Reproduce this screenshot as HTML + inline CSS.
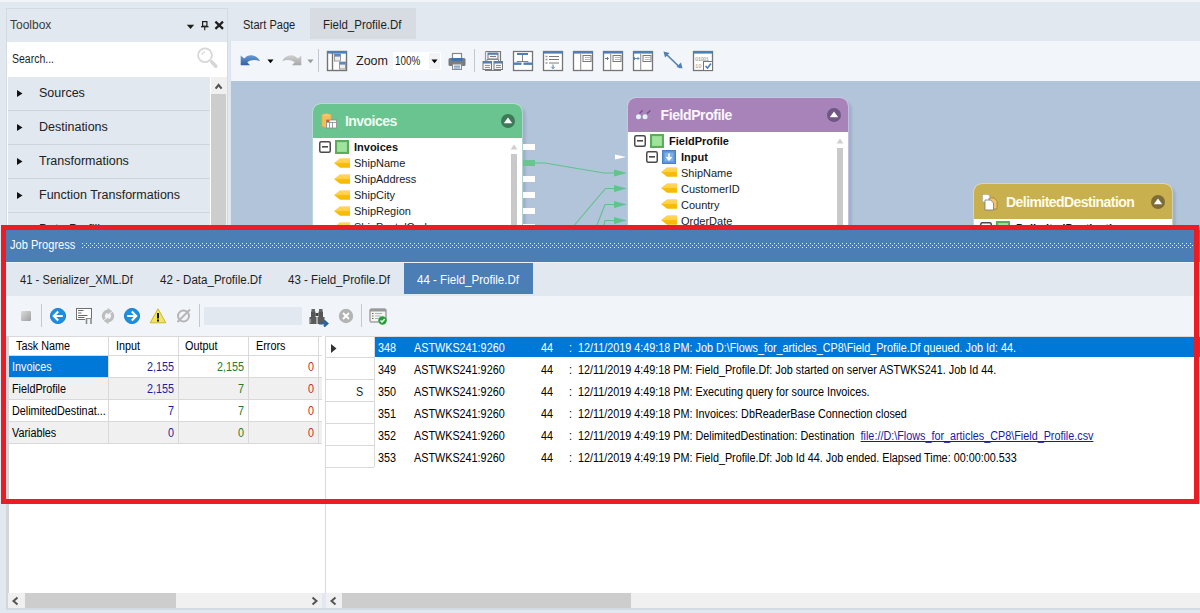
<!DOCTYPE html>
<html><head><meta charset="utf-8">
<style>
*{margin:0;padding:0;box-sizing:border-box}
html,body{width:1200px;height:613px;overflow:hidden;background:#e1e8f0;font-family:"Liberation Sans",sans-serif;color:#1e1e1e;position:relative}
.a{position:absolute;display:block}
.t{position:absolute;white-space:nowrap;line-height:1}
</style></head><body>

<div class="a" style="left:0px;top:0px;width:1200px;height:2px;background:#f1f4f8;"></div>
<div class="a" style="left:6px;top:8px;width:222px;height:605px;background:#e1e8f0;border:1px solid #d3dae2"></div>
<div class="t" style="left:10px;top:18.84px;font-size:12px;color:#3b3b3b;">Toolbox</div>
<svg class="a" style="left:186px;top:20px;" width="40" height="12" viewBox="0 0 40 12"><path d="M0.8 4.8H8.2L4.5 8.9z" fill="#1e1e1e"/><rect x="16.6" y="1.6" width="4.3" height="4.6" fill="none" stroke="#1e1e1e" stroke-width="1.2"/><path d="M15 6.7H22.5" stroke="#1e1e1e" stroke-width="1.3"/><path d="M18.75 7V10.2" stroke="#1e1e1e" stroke-width="1.1"/><path d="M30.2 2.4L36.2 8.1M36.2 2.4L30.2 8.1" stroke="#1e1e1e" stroke-width="2.2" stroke-linecap="square"/></svg>
<div class="a" style="left:7px;top:42px;width:220px;height:35px;background:#ffffff;"></div>
<div class="t" style="left:12px;top:52.84px;font-size:12px;color:#1e1e1e;transform:scaleX(0.875);transform-origin:0 50%;">Search...</div>
<svg class="a" style="left:196px;top:47px;" width="24" height="24" viewBox="0 0 24 24"><circle cx="9" cy="8.3" r="6.9" fill="none" stroke="#d6d6d6" stroke-width="1.8"/><path d="M6 8A3.6 3.6 0 0 1 9 4.9" fill="none" stroke="#d6d6d6" stroke-width="1.1"/><path d="M15.8 15L19.8 19.2" stroke="#d6d6d6" stroke-width="3.6" stroke-linecap="round"/></svg>
<div class="a" style="left:8px;top:110px;width:202px;height:1px;background:#cdd5de;"></div>
<svg class="a" style="left:17px;top:90px;" width="7" height="8" viewBox="0 0 7 8"><path d="M0 0L5.5 3.5L0 7z" fill="#111"/></svg>
<div class="t" style="left:39px;top:87.42px;font-size:12.5px;color:#222;">Sources</div>
<div class="a" style="left:8px;top:144px;width:202px;height:1px;background:#cdd5de;"></div>
<svg class="a" style="left:17px;top:124px;" width="7" height="8" viewBox="0 0 7 8"><path d="M0 0L5.5 3.5L0 7z" fill="#111"/></svg>
<div class="t" style="left:39px;top:121.42px;font-size:12.5px;color:#222;">Destinations</div>
<div class="a" style="left:8px;top:178px;width:202px;height:1px;background:#cdd5de;"></div>
<svg class="a" style="left:17px;top:158px;" width="7" height="8" viewBox="0 0 7 8"><path d="M0 0L5.5 3.5L0 7z" fill="#111"/></svg>
<div class="t" style="left:39px;top:155.42px;font-size:12.5px;color:#222;">Transformations</div>
<div class="a" style="left:8px;top:212px;width:202px;height:1px;background:#cdd5de;"></div>
<svg class="a" style="left:17px;top:192px;" width="7" height="8" viewBox="0 0 7 8"><path d="M0 0L5.5 3.5L0 7z" fill="#111"/></svg>
<div class="t" style="left:39px;top:189.42px;font-size:12.5px;color:#222;">Function Transformations</div>
<div class="a" style="left:8px;top:246px;width:202px;height:1px;background:#cdd5de;"></div>
<svg class="a" style="left:17px;top:226px;" width="7" height="8" viewBox="0 0 7 8"><path d="M0 0L5.5 3.5L0 7z" fill="#111"/></svg>
<div class="t" style="left:39px;top:223.42px;font-size:12.5px;color:#222;">Data Profiling</div>
<div class="a" style="left:7px;top:77px;width:1px;height:150px;background:#ffffff;"></div>
<div class="a" style="left:210px;top:77px;width:17px;height:150px;background:#f0f0f0;"></div>
<div class="a" style="left:210px;top:77px;width:1px;height:150px;background:#ffffff;"></div>
<svg class="a" style="left:213px;top:81.7px;" width="12" height="9" viewBox="0 0 12 9"><path d="M2.6 6.6L5.6 3L8.6 6.6" fill="none" stroke="#555" stroke-width="2.1"/></svg>
<div class="a" style="left:211px;top:94px;width:15px;height:140px;background:#cdcdcd;"></div>
<div class="a" style="left:227px;top:8px;width:1px;height:605px;background:#d3dae2;"></div>
<div class="a" style="left:230px;top:41px;width:1px;height:200px;background:#dbe3ec;"></div>
<div class="t" style="left:243px;top:18.84px;font-size:12px;color:#1e1e1e;transform:scaleX(0.92);transform-origin:0 50%;">Start Page</div>
<div class="a" style="left:310px;top:8px;width:106px;height:31px;background:#d7dce2;"></div>
<div class="t" style="left:323px;top:18.84px;font-size:12px;color:#1e1e1e;transform:scaleX(0.956);transform-origin:0 50%;">Field_Profile.Df</div>
<div class="a" style="left:231px;top:41px;width:969px;height:40px;background:#f2f5f9;"></div>
<div class="a" style="left:231px;top:81px;width:969px;height:170px;background:#b2c4da;"></div>
<svg class="a" style="left:240px;top:53px;" width="21" height="13" viewBox="0 0 21 13"><defs><linearGradient id="ug" x1="0" y1="0" x2="0" y2="1"><stop offset="0" stop-color="#6a9ad4"/><stop offset="1" stop-color="#2f62a8"/></linearGradient></defs><path d="M0.7 2.5V12.2H10L7.3 9.3C10.5 6.6 15.5 6.2 20 8.2C16.5 1.5 8.5 0 4.2 5.6z" fill="url(#ug)"/></svg>
<svg class="a" style="left:267px;top:59px;" width="7" height="5" viewBox="0 0 7 5"><path d="M0.5 0.5H6.5L3.5 4.2z" fill="#000"/></svg>
<svg class="a" style="left:281px;top:53px;" width="21" height="13" viewBox="0 0 21 13"><defs><linearGradient id="rg" x1="0" y1="0" x2="0" y2="1"><stop offset="0" stop-color="#d0d0d0"/><stop offset="1" stop-color="#a8a8a8"/></linearGradient></defs><path d="M20.3 2.5V12.2H11L13.7 9.3C10.5 6.6 5.5 6.2 1 8.2C4.5 1.5 12.5 0 16.8 5.6z" fill="url(#rg)"/></svg>
<svg class="a" style="left:307px;top:59px;" width="7" height="5" viewBox="0 0 7 5"><path d="M0.5 0.5H6.5L3.5 4.2z" fill="#999"/></svg>
<div class="a" style="left:318px;top:49px;width:1px;height:23px;background:#c4c9cf;"></div>
<svg class="a" style="left:326px;top:50px;" width="22" height="22" viewBox="0 0 22 22"><rect x="1.5" y="1.5" width="19" height="19" fill="#fff" stroke="#747474" stroke-width="1.4"/><rect x="1" y="1" width="20" height="2.6" fill="#4f7fb8"/><path d="M6.5 3V21" stroke="#747474" stroke-width="1.4"/><rect x="8.5" y="4" width="6" height="7" fill="#eee" stroke="#888" stroke-width="0.8"/><rect x="8.5" y="4" width="6" height="2.6" fill="#5a8ac4"/><rect x="13.5" y="12" width="6" height="7" fill="#eee" stroke="#888" stroke-width="0.8"/><rect x="13.5" y="12" width="6" height="2.6" fill="#5a8ac4"/></svg>
<div class="t" style="left:356px;top:55.02px;font-size:12.5px;color:#1e1e1e;">Zoom</div>
<div class="a" style="left:393px;top:52px;width:48px;height:18px;background:#ffffff;"></div>
<div class="a" style="left:429px;top:53px;width:11px;height:16px;background:#f1f3f6;"></div>
<div class="t" style="left:395px;top:54.84px;font-size:12px;color:#1e1e1e;transform:scaleX(0.82);transform-origin:0 50%;">100%</div>
<svg class="a" style="left:431px;top:59px;" width="7" height="5" viewBox="0 0 7 5"><path d="M0.5 0.5H6.5L3.5 4.2z" fill="#000"/></svg>
<svg class="a" style="left:448px;top:52px;" width="18" height="18" viewBox="0 0 18 18"><rect x="4.5" y="1.5" width="9" height="6" fill="#fff" stroke="#888" stroke-width="1.2"/><rect x="0.5" y="6" width="17" height="8" rx="1.5" fill="#7b7b7b"/><rect x="3.5" y="6" width="11" height="2.8" fill="#3d72b4"/><rect x="4.5" y="12" width="9" height="5.5" fill="#eef2f6" stroke="#8a8a8a" stroke-width="1"/><path d="M6 14.2H12M6 16H12" stroke="#4f7fb8" stroke-width="0.9"/></svg>
<div class="a" style="left:474px;top:49px;width:1px;height:23px;background:#c4c9cf;"></div>
<svg class="a" style="left:482px;top:50px;" width="22" height="22" viewBox="0 0 22 22"><path d="M3.5 1.5H18.5V11" fill="none" stroke="#7a7a7a" stroke-width="1.2"/><path d="M3.5 1.5V11" fill="none" stroke="#9a9a9a" stroke-width="1.2"/><rect x="6" y="3" width="10" height="6" fill="#f4f4f4" stroke="#7a7a7a" stroke-width="1"/><rect x="6" y="3" width="10" height="1.8" fill="#4f7fb8"/><path d="M8 6.5H14" stroke="#7a7a7a"/><rect x="1" y="11.5" width="8.5" height="8" fill="#f4f4f4" stroke="#7a7a7a" stroke-width="1"/><rect x="1" y="11.5" width="8.5" height="2" fill="#4f7fb8"/><rect x="12" y="11.5" width="8.5" height="8" fill="#f4f4f4" stroke="#7a7a7a" stroke-width="1"/><rect x="12" y="11.5" width="8.5" height="2" fill="#4f7fb8"/><path d="M3 15.5H8M3 17.5H8M14 15.5H19M14 17.5H19" stroke="#7a7a7a" stroke-width="0.8"/><path d="M3 20.5H19" stroke="#7a7a7a" stroke-width="1"/><path d="M5 11.5V9.5H16.5V11.5" fill="none" stroke="#7a7a7a" stroke-width="0.8"/></svg>
<svg class="a" style="left:512px;top:50px;" width="22" height="22" viewBox="0 0 22 22"><rect x="1.5" y="1.5" width="19" height="19" fill="#fff" stroke="#757575" stroke-width="1.3"/><rect x="5" y="3" width="11" height="2" fill="#4f7fb8"/><path d="M10.5 5V11.5M5 12.5V11.5H16V12.5" fill="none" stroke="#757575" stroke-width="0.9"/><rect x="1" y="12.5" width="8.5" height="2.4" fill="#4f7fb8"/><rect x="11.5" y="12.5" width="9.5" height="2.4" fill="#4f7fb8"/></svg>
<svg class="a" style="left:542px;top:50px;" width="22" height="22" viewBox="0 0 22 22"><rect x="1.5" y="1.5" width="19" height="19" fill="#fff" stroke="#757575" stroke-width="1.3"/><rect x="1" y="1" width="20" height="2.6" fill="#4f7fb8"/><path d="M7 6.5H17M7 9.5H17M7 13H17" stroke="#7a7a7a" stroke-width="1"/><path d="M3.5 6.5H5.5M3.5 9.5H5.5M3.5 13H5.5" stroke="#999" stroke-width="1.4"/><path d="M11 14.5V18.5M9.3 16.8L11 18.6L12.7 16.8" fill="none" stroke="#4f7fb8" stroke-width="1"/></svg>
<svg class="a" style="left:572px;top:50px;" width="22" height="22" viewBox="0 0 22 22"><rect x="1.5" y="1.5" width="19" height="19" fill="#fff" stroke="#757575" stroke-width="1.3"/><rect x="1" y="1" width="20" height="2.6" fill="#4f7fb8"/><rect x="8" y="3" width="1.5" height="17" fill="#c8c8c8"/><path d="M8.5 3V20" stroke="#8a8a8a" stroke-width="0.6"/><rect x="11" y="5.5" width="8" height="6" fill="#fff" stroke="#7a7a7a" stroke-width="1"/><path d="M13 7.5H18M13 9.5H18" stroke="#9a9a9a" stroke-width="0.7"/></svg>
<svg class="a" style="left:602px;top:50px;" width="22" height="22" viewBox="0 0 22 22"><rect x="1.5" y="1.5" width="19" height="19" fill="#fff" stroke="#757575" stroke-width="1.3"/><rect x="1" y="1" width="20" height="2.6" fill="#4f7fb8"/><rect x="8" y="3" width="1.5" height="17" fill="#c8c8c8"/><path d="M8.5 3V20" stroke="#8a8a8a" stroke-width="0.6"/><rect x="11" y="5.5" width="8" height="6" fill="#fff" stroke="#7a7a7a" stroke-width="1"/><path d="M13 7.5H18M13 9.5H18" stroke="#9a9a9a" stroke-width="0.7"/><path d="M3 8.5H6M5 7L6.5 8.5L5 10" fill="none" stroke="#4f7fb8" stroke-width="1"/></svg>
<svg class="a" style="left:632px;top:50px;" width="22" height="22" viewBox="0 0 22 22"><rect x="1.5" y="1.5" width="19" height="19" fill="#fff" stroke="#757575" stroke-width="1.3"/><rect x="1" y="1" width="20" height="2.6" fill="#4f7fb8"/><rect x="8" y="3" width="1.5" height="17" fill="#c8c8c8"/><path d="M8.5 3V20" stroke="#8a8a8a" stroke-width="0.6"/><rect x="11" y="5.5" width="8" height="6" fill="#fff" stroke="#7a7a7a" stroke-width="1"/><path d="M13 7.5H18M13 9.5H18" stroke="#9a9a9a" stroke-width="0.7"/><path d="M1.5 8.5H7M3 7L1.5 8.5L3 10M5.5 7L7 8.5L5.5 10" fill="none" stroke="#4f7fb8" stroke-width="0.9"/></svg>
<svg class="a" style="left:662px;top:50px;" width="22" height="22" viewBox="0 0 22 22"><path d="M4 4L18.5 18" stroke="#4f7fb8" stroke-width="1.6"/><path d="M1.5 1.5L7.5 3L3 7.5z" fill="#4f7fb8"/><path d="M20.5 18.5L14.5 17L19 12.5z" fill="#4f7fb8"/></svg>
<svg class="a" style="left:692px;top:50px;" width="22" height="22" viewBox="0 0 22 22"><rect x="1.5" y="1.5" width="19" height="19" fill="#fff" stroke="#757575" stroke-width="1.3"/><rect x="1" y="1" width="20" height="2.6" fill="#4f7fb8"/><text x="3" y="11" font-family="Liberation Mono" font-size="5.5" fill="#9a9a9a" letter-spacing="-0.6">01001</text><text x="3" y="17.5" font-family="Liberation Mono" font-size="5.5" fill="#9a9a9a">10</text><rect x="11.5" y="11.5" width="9" height="9" fill="#fff" stroke="#757575" stroke-width="1"/><path d="M13.5 16L15.5 18L19 13.5" fill="none" stroke="#4f7fb8" stroke-width="1.6"/></svg>
<div class="a" style="left:313px;top:104px;width:209px;height:140px;background:#fff;border-radius:8px 8px 0 0;overflow:hidden;box-shadow:0 0 0 1px rgba(190,235,210,0.55),4px 3px 2px rgba(70,90,120,0.16)"><div class="a" style="left:0;top:0;width:209px;height:34px;background:#69c48f"></div></div>
<svg class="a" style="left:320px;top:112px;" width="18" height="18" viewBox="0 0 18 18"><ellipse cx="6.5" cy="3.5" rx="4.6" ry="1.8" fill="#f6cf7e" stroke="#e7ab45" stroke-width="0.8"/><path d="M1.9 3.5V13.5C1.9 14.6 4 15.4 6.5 15.4S11.1 14.6 11.1 13.5V3.5" fill="#f2bf5e" stroke="#e6a63c" stroke-width="0.8"/><rect x="6.5" y="8" width="10" height="8" fill="#fff" stroke="#8a8a8a" stroke-width="0.8"/><rect x="6.5" y="8" width="3" height="2" fill="#e05a2a"/><path d="M9.5 10V16M12.5 10V16M6.5 10.5H16.5" stroke="#8a8a8a" stroke-width="0.8"/></svg>
<div class="t" style="left:345px;top:114.15px;font-size:14px;color:#f1fcf4;font-weight:bold;letter-spacing:-0.55px">Invoices</div>
<svg class="a" style="left:501px;top:114px;" width="14" height="14" viewBox="0 0 14 14"><circle cx="7" cy="7" r="7" fill="#3e7a57"/><path d="M2.8 9.3L7 3.6L11.2 9.3z" fill="#fff"/></svg>
<svg class="a" style="left:319px;top:141px;" width="12" height="12" viewBox="0 0 12 12"><rect x="0.75" y="0.75" width="10.5" height="10.5" rx="1.5" fill="#fff" stroke="#4a4a4a" stroke-width="1.5"/><rect x="3" y="5" width="6" height="1.6" fill="#4a4a4a"/></svg>
<svg class="a" style="left:335px;top:140px;" width="14" height="14" viewBox="0 0 14 14"><rect x="1" y="1" width="12" height="12" fill="#9fe39d" stroke="#5aae5a" stroke-width="2.2"/></svg>
<div class="t" style="left:354px;top:141.69px;font-size:11px;color:#111;font-weight:bold;">Invoices</div>
<svg class="a" style="left:334px;top:158px;" width="17" height="10" viewBox="0 0 17 10"><defs><linearGradient id="tg" x1="0" y1="0" x2="0" y2="1"><stop offset="0" stop-color="#ffd766"/><stop offset="0.5" stop-color="#ffcf3c"/><stop offset="0.51" stop-color="#fabd0c"/><stop offset="1" stop-color="#f7b808"/></linearGradient></defs><path d="M0 5L6 0.3H16V9.7H6z" fill="url(#tg)"/></svg>
<div class="t" style="left:354px;top:157.69px;font-size:11px;color:#1a1a1a;">ShipName</div>
<svg class="a" style="left:334px;top:174px;" width="17" height="10" viewBox="0 0 17 10"><defs><linearGradient id="tg" x1="0" y1="0" x2="0" y2="1"><stop offset="0" stop-color="#ffd766"/><stop offset="0.5" stop-color="#ffcf3c"/><stop offset="0.51" stop-color="#fabd0c"/><stop offset="1" stop-color="#f7b808"/></linearGradient></defs><path d="M0 5L6 0.3H16V9.7H6z" fill="url(#tg)"/></svg>
<div class="t" style="left:354px;top:173.69px;font-size:11px;color:#1a1a1a;">ShipAddress</div>
<svg class="a" style="left:334px;top:190px;" width="17" height="10" viewBox="0 0 17 10"><defs><linearGradient id="tg" x1="0" y1="0" x2="0" y2="1"><stop offset="0" stop-color="#ffd766"/><stop offset="0.5" stop-color="#ffcf3c"/><stop offset="0.51" stop-color="#fabd0c"/><stop offset="1" stop-color="#f7b808"/></linearGradient></defs><path d="M0 5L6 0.3H16V9.7H6z" fill="url(#tg)"/></svg>
<div class="t" style="left:354px;top:189.69px;font-size:11px;color:#1a1a1a;">ShipCity</div>
<svg class="a" style="left:334px;top:206px;" width="17" height="10" viewBox="0 0 17 10"><defs><linearGradient id="tg" x1="0" y1="0" x2="0" y2="1"><stop offset="0" stop-color="#ffd766"/><stop offset="0.5" stop-color="#ffcf3c"/><stop offset="0.51" stop-color="#fabd0c"/><stop offset="1" stop-color="#f7b808"/></linearGradient></defs><path d="M0 5L6 0.3H16V9.7H6z" fill="url(#tg)"/></svg>
<div class="t" style="left:354px;top:205.69px;font-size:11px;color:#1a1a1a;">ShipRegion</div>
<svg class="a" style="left:334px;top:222px;" width="17" height="10" viewBox="0 0 17 10"><defs><linearGradient id="tg" x1="0" y1="0" x2="0" y2="1"><stop offset="0" stop-color="#ffd766"/><stop offset="0.5" stop-color="#ffcf3c"/><stop offset="0.51" stop-color="#fabd0c"/><stop offset="1" stop-color="#f7b808"/></linearGradient></defs><path d="M0 5L6 0.3H16V9.7H6z" fill="url(#tg)"/></svg>
<div class="t" style="left:354px;top:221.69px;font-size:11px;color:#1a1a1a;">ShipPostalCode</div>
<svg class="a" style="left:510px;top:144px;" width="8" height="6" viewBox="0 0 8 6"><path d="M0.5 5.5L4 0.5L7.5 5.5z" fill="#cfcfcf"/></svg>
<div class="a" style="left:511px;top:154px;width:6px;height:100px;background:#c9c9c9;"></div>
<div class="a" style="left:523px;top:144px;width:12px;height:6px;background:#ffffff;"></div>
<div class="a" style="left:523px;top:160px;width:12px;height:6px;background:#69c48f;"></div>
<div class="a" style="left:523px;top:176px;width:12px;height:6px;background:#ffffff;"></div>
<div class="a" style="left:523px;top:192px;width:12px;height:6px;background:#ffffff;"></div>
<div class="a" style="left:523px;top:208px;width:12px;height:6px;background:#ffffff;"></div>
<div class="a" style="left:523px;top:224px;width:12px;height:6px;background:#ffffff;"></div>
<div class="a" style="left:628px;top:98px;width:220px;height:150px;background:#fff;border-radius:8px 8px 0 0;overflow:hidden;box-shadow:0 0 0 1px rgba(215,200,240,0.6),4px 3px 2px rgba(70,90,120,0.16)"><div class="a" style="left:0;top:0;width:220px;height:34px;background:#a883b9"></div></div>
<svg class="a" style="left:634px;top:108px;" width="20" height="13" viewBox="0 0 20 13"><path d="M5.5 5.5L8.5 2.5M13 5.5L16.5 2.5" stroke="#6b4f86" stroke-width="1.2"/><circle cx="4.5" cy="8.8" r="2.5" fill="#e4f2fb"/><circle cx="11" cy="8.8" r="2.5" fill="#e4f2fb"/></svg>
<div class="t" style="left:660.5px;top:108.15px;font-size:14px;color:#fbf6fd;font-weight:bold;letter-spacing:-0.4px">FieldProfile</div>
<svg class="a" style="left:827px;top:108px;" width="14" height="14" viewBox="0 0 14 14"><circle cx="7" cy="7" r="7" fill="#6f5684"/><path d="M2.8 9.3L7 3.6L11.2 9.3z" fill="#fff"/></svg>
<svg class="a" style="left:634px;top:135px;" width="12" height="12" viewBox="0 0 12 12"><rect x="0.75" y="0.75" width="10.5" height="10.5" rx="1.5" fill="#fff" stroke="#4a4a4a" stroke-width="1.5"/><rect x="3" y="5" width="6" height="1.6" fill="#4a4a4a"/></svg>
<svg class="a" style="left:650px;top:134px;" width="14" height="14" viewBox="0 0 14 14"><rect x="1" y="1" width="12" height="12" fill="#9fe39d" stroke="#5aae5a" stroke-width="2.2"/></svg>
<div class="t" style="left:669px;top:135.69px;font-size:11px;color:#111;font-weight:bold;">FieldProfile</div>
<svg class="a" style="left:646px;top:151px;" width="12" height="12" viewBox="0 0 12 12"><rect x="0.75" y="0.75" width="10.5" height="10.5" rx="1.5" fill="#fff" stroke="#4a4a4a" stroke-width="1.5"/><rect x="3" y="5" width="6" height="1.6" fill="#4a4a4a"/></svg>
<svg class="a" style="left:662px;top:150px;" width="14" height="14" viewBox="0 0 14 14"><rect x="0.5" y="0.5" width="13" height="13" fill="#5b93d6" stroke="#4b7fc0"/><rect x="2.5" y="2.5" width="9" height="9" fill="#7fb0ea"/><path d="M7 3.5V9M4.5 7L7 9.8L9.5 7" fill="none" stroke="#fff" stroke-width="1.6"/></svg>
<div class="t" style="left:681px;top:151.69px;font-size:11px;color:#111;font-weight:bold;">Input</div>
<svg class="a" style="left:661px;top:167px;" width="17" height="10" viewBox="0 0 17 10"><defs><linearGradient id="tg" x1="0" y1="0" x2="0" y2="1"><stop offset="0" stop-color="#ffd766"/><stop offset="0.5" stop-color="#ffcf3c"/><stop offset="0.51" stop-color="#fabd0c"/><stop offset="1" stop-color="#f7b808"/></linearGradient></defs><path d="M0 5L6 0.3H16V9.7H6z" fill="url(#tg)"/></svg>
<div class="t" style="left:681px;top:167.69px;font-size:11px;color:#1a1a1a;">ShipName</div>
<svg class="a" style="left:661px;top:183px;" width="17" height="10" viewBox="0 0 17 10"><defs><linearGradient id="tg" x1="0" y1="0" x2="0" y2="1"><stop offset="0" stop-color="#ffd766"/><stop offset="0.5" stop-color="#ffcf3c"/><stop offset="0.51" stop-color="#fabd0c"/><stop offset="1" stop-color="#f7b808"/></linearGradient></defs><path d="M0 5L6 0.3H16V9.7H6z" fill="url(#tg)"/></svg>
<div class="t" style="left:681px;top:183.69px;font-size:11px;color:#1a1a1a;">CustomerID</div>
<svg class="a" style="left:661px;top:199px;" width="17" height="10" viewBox="0 0 17 10"><defs><linearGradient id="tg" x1="0" y1="0" x2="0" y2="1"><stop offset="0" stop-color="#ffd766"/><stop offset="0.5" stop-color="#ffcf3c"/><stop offset="0.51" stop-color="#fabd0c"/><stop offset="1" stop-color="#f7b808"/></linearGradient></defs><path d="M0 5L6 0.3H16V9.7H6z" fill="url(#tg)"/></svg>
<div class="t" style="left:681px;top:199.69px;font-size:11px;color:#1a1a1a;">Country</div>
<svg class="a" style="left:661px;top:215px;" width="17" height="10" viewBox="0 0 17 10"><defs><linearGradient id="tg" x1="0" y1="0" x2="0" y2="1"><stop offset="0" stop-color="#ffd766"/><stop offset="0.5" stop-color="#ffcf3c"/><stop offset="0.51" stop-color="#fabd0c"/><stop offset="1" stop-color="#f7b808"/></linearGradient></defs><path d="M0 5L6 0.3H16V9.7H6z" fill="url(#tg)"/></svg>
<div class="t" style="left:681px;top:215.69px;font-size:11px;color:#1a1a1a;">OrderDate</div>
<svg class="a" style="left:836px;top:138px;" width="8" height="6" viewBox="0 0 8 6"><path d="M0.5 5.5L4 0.5L7.5 5.5z" fill="#cfcfcf"/></svg>
<div class="a" style="left:837px;top:148px;width:6px;height:100px;background:#c9c9c9;"></div>
<div class="a" style="left:974px;top:184px;width:198px;height:60px;background:#fff;border-radius:8px 8px 0 0;overflow:hidden;box-shadow:0 0 0 1px rgba(240,230,170,0.55),4px 3px 2px rgba(70,90,120,0.16)"><div class="a" style="left:0;top:0;width:198px;height:35px;background:#c8b04f"></div></div>
<svg class="a" style="left:981px;top:193px;" width="18" height="18" viewBox="0 0 18 18"><path d="M1.5 1.5H7L9 3.5V9H1.5z" fill="#fff" stroke="#8a8a8a" stroke-width="0.8" stroke-dasharray="1 1"/><path d="M8 5H13L16 8V16H8z" fill="#f2c36a" stroke="#9a8040" stroke-width="0.8"/><path d="M4 7H9.5L12.5 10V17H4z" fill="#fff" stroke="#777" stroke-width="0.8"/></svg>
<div class="t" style="left:1006px;top:195.15px;font-size:14px;color:#fffbe6;font-weight:bold;letter-spacing:-0.55px">DelimitedDestination</div>
<svg class="a" style="left:1151px;top:195px;" width="14" height="14" viewBox="0 0 14 14"><circle cx="7" cy="7" r="7" fill="#7e6c37"/><path d="M2.8 9.3L7 3.6L11.2 9.3z" fill="#fff"/></svg>
<svg class="a" style="left:980px;top:222px;" width="12" height="12" viewBox="0 0 12 12"><rect x="0.75" y="0.75" width="10.5" height="10.5" rx="1.5" fill="#fff" stroke="#4a4a4a" stroke-width="1.5"/><rect x="3" y="5" width="6" height="1.6" fill="#4a4a4a"/></svg>
<svg class="a" style="left:996px;top:221px;" width="14" height="14" viewBox="0 0 14 14"><rect x="1" y="1" width="12" height="12" fill="#9fe39d" stroke="#5aae5a" stroke-width="2.2"/></svg>
<div class="t" style="left:1016px;top:222.69px;font-size:11px;color:#111;font-weight:bold;">DelimitedDestination</div>
<svg class="a" style="left:531px;top:150px;" width="100" height="80" viewBox="0 0 100 80"><g fill="none" stroke="#5fc28a" stroke-width="1.1"><path d="M4 13H14L73 23H84"/><path d="M43.5 75L74.5 38.5H84"/><path d="M66 75L74 54.5H84"/><path d="M73 75L74 70.5H84"/></g><g fill="#62c48c"><path d="M83 19.5L96 23L83 26.5z"/><path d="M83 35L96 38.5L83 42z"/><path d="M83 51L96 54.5L83 58z"/><path d="M83 67L96 70.5L83 74z"/></g><path d="M84 4.5L95 7L84 9.5z" fill="#fff"/></svg>
<div class="a" style="left:6px;top:230px;width:1194px;height:383px;background:#e1e8f0;"></div>
<div class="a" style="left:6px;top:230px;width:1194px;height:32px;background:#4a7eb5;"></div>
<div class="t" style="left:10px;top:238.84px;font-size:12px;color:#ffffff;transform:scaleX(0.924);transform-origin:0 50%;">Job Progress</div>
<svg class="a" style="left:82px;top:243px;shape-rendering:crispEdges" width="1112" height="5" viewBox="0 0 1112 5"><defs><pattern id="dp" width="4" height="4" patternUnits="userSpaceOnUse"><rect x="0" y="0" width="1" height="1" fill="#e2f0fb"/><rect x="2" y="2" width="1" height="1" fill="#e2f0fb"/></pattern></defs><rect x="0" y="0" width="1112" height="5" fill="url(#dp)"/></svg>
<div class="a" style="left:6px;top:262px;width:1194px;height:1px;background:#eef2f6;"></div>
<div class="t" style="left:20px;top:273.84px;font-size:12px;color:#1e1e1e;transform:scaleX(0.934);transform-origin:0 50%;">41 - Serializer_XML.Df</div>
<div class="t" style="left:160px;top:273.84px;font-size:12px;color:#1e1e1e;transform:scaleX(0.962);transform-origin:0 50%;">42 - Data_Profile.Df</div>
<div class="t" style="left:288px;top:273.84px;font-size:12px;color:#1e1e1e;transform:scaleX(0.962);transform-origin:0 50%;">43 - Field_Profile.Df</div>
<div class="a" style="left:404px;top:263px;width:129px;height:31px;background:#4a7eb5;"></div>
<div class="t" style="left:417px;top:273.84px;font-size:12px;color:#ffffff;transform:scaleX(0.962);transform-origin:0 50%;">44 - Field_Profile.Df</div>
<div class="a" style="left:6px;top:296px;width:1194px;height:40px;background:#f1f5f9;"></div>
<svg class="a" style="left:20px;top:310px;" width="12" height="12" viewBox="0 0 12 12"><defs><linearGradient id="sg" x1="0" y1="0" x2="1" y2="1"><stop offset="0" stop-color="#dcdcdc"/><stop offset="1" stop-color="#9e9e9e"/></linearGradient></defs><rect x="1" y="1" width="10" height="10" rx="1" fill="url(#sg)"/></svg>
<div class="a" style="left:41px;top:304px;width:1px;height:23px;background:#c4c9cf;"></div>
<svg class="a" style="left:49px;top:307px;" width="18" height="18" viewBox="0 0 18 18"><circle cx="9" cy="9" r="7.6" fill="#1b90e2" stroke="#1878c4" stroke-width="0.9"/><path d="M13.8 9H5.3M9.2 4.6L4.8 9L9.2 13.4" fill="none" stroke="#fff" stroke-width="2.1"/></svg>
<svg class="a" style="left:75px;top:307px;" width="18" height="18" viewBox="0 0 18 18"><rect x="1.5" y="1.5" width="15" height="11" fill="#fff" stroke="#707070" stroke-width="1"/><path d="M3 3.5H8.5M3 6H6.5M3 8.5H12.5M3 10.5H9.5" stroke="#6a6a6a" stroke-width="1"/><rect x="10" y="11" width="7.5" height="7" fill="#f1f5f9"/><path d="M11.5 11V17M16 11V17" stroke="#8a8a8a" stroke-width="1.6"/><path d="M11 11.5H16.5" stroke="#8a8a8a" stroke-width="1"/></svg>
<svg class="a" style="left:98px;top:304px;" width="20" height="24" viewBox="0 0 20 24"><g fill="none" stroke="#bdbdbd" stroke-width="3"><path d="M6.6 15.2A4.8 4.8 0 0 1 10 7.2"/><path d="M13.4 8.8A4.8 4.8 0 0 1 10 16.8"/></g><path d="M9.5 3.8L14.3 7.2L9.5 10.6z" fill="#bdbdbd"/><path d="M10.5 13.4L5.7 16.8L10.5 20.2z" fill="#bdbdbd"/></svg>
<svg class="a" style="left:123px;top:307px;" width="18" height="18" viewBox="0 0 18 18"><circle cx="9" cy="9" r="7.6" fill="#1b90e2" stroke="#1878c4" stroke-width="0.9"/><path d="M4.2 9H12.7M8.8 4.6L13.2 9L8.8 13.4" fill="none" stroke="#fff" stroke-width="2.1"/></svg>
<svg class="a" style="left:149px;top:307px;" width="18" height="18" viewBox="0 0 18 18"><path d="M9 1.8L16.8 15.8H1.2z" fill="#f2e55a" stroke="#c9b92e" stroke-width="1" stroke-linejoin="round"/><rect x="8" y="6" width="2" height="5.5" fill="#111"/><rect x="8" y="12.5" width="2" height="2" fill="#111"/></svg>
<svg class="a" style="left:176px;top:307px;" width="16" height="18" viewBox="0 0 16 18"><circle cx="7.5" cy="9" r="5.5" fill="none" stroke="#b5b5b5" stroke-width="2"/><path d="M1.5 15L14 2.5" stroke="#b5b5b5" stroke-width="2"/></svg>
<div class="a" style="left:199px;top:304px;width:1px;height:23px;background:#c4c9cf;"></div>
<div class="a" style="left:204px;top:307px;width:98px;height:18px;background:#e1e8f0;"></div>
<svg class="a" style="left:308px;top:307px;" width="22" height="20" viewBox="0 0 22 20"><path d="M3 4.5H7.5V11H3z M10.5 4.5H15V11H10.5z" fill="#555"/><rect x="3.5" y="2" width="3.5" height="3" fill="#666"/><rect x="11" y="2" width="3.5" height="3" fill="#666"/><rect x="7.5" y="6" width="3" height="3" fill="#444"/><rect x="1.5" y="10" width="7" height="7" fill="#5a5a5a"/><rect x="9.5" y="10" width="7" height="7" fill="#5a5a5a"/><rect x="2" y="12" width="1.2" height="4" fill="#8a8a8a"/><path d="M11 16.5H19M16 13.5L19.3 16.5L16 19.5" fill="none" stroke="#2c5f9e" stroke-width="2.2"/></svg>
<svg class="a" style="left:338px;top:308px;" width="16" height="16" viewBox="0 0 16 16"><circle cx="8" cy="8" r="7.2" fill="#b3b3b3"/><path d="M5 5L11 11M11 5L5 11" stroke="#fff" stroke-width="1.8"/></svg>
<div class="a" style="left:361px;top:304px;width:1px;height:23px;background:#c4c9cf;"></div>
<svg class="a" style="left:369px;top:308px;" width="19" height="17" viewBox="0 0 19 17"><rect x="1" y="1" width="16" height="13" rx="1" fill="#f4f4f4" stroke="#7a7a7a" stroke-width="1"/><rect x="1" y="1" width="16" height="2.5" fill="#9a9a9a"/><path d="M3 5.5H4.5M3 8H4.5M3 10.5H4.5" stroke="#5a7a3a" stroke-width="1.2"/><path d="M6 5.5H13M6 8H12M6 10.5H11" stroke="#9aa" stroke-width="0.8"/><circle cx="13.5" cy="12.5" r="4.2" fill="#22a035"/><path d="M11.5 12.5L13 14L15.8 11" fill="none" stroke="#fff" stroke-width="1.4"/></svg>
<div class="a" style="left:8px;top:336px;width:1192px;height:257px;background:#ffffff;"></div>
<div class="a" style="left:6px;top:336px;width:2px;height:272px;background:#d0d7df;"></div>
<div class="a" style="left:8px;top:336px;width:1px;height:257px;background:#d6d6d6;"></div>
<div class="a" style="left:8px;top:336px;width:314px;height:1px;background:#d9d9d9;"></div>
<div class="a" style="left:8px;top:355px;width:314px;height:1px;background:#d9d9d9;"></div>
<div class="a" style="left:9px;top:356px;width:313px;height:21px;background:#ffffff;"></div>
<div class="a" style="left:8px;top:377px;width:314px;height:1px;background:#d9d9d9;"></div>
<div class="a" style="left:9px;top:378px;width:313px;height:21px;background:#f0f0f0;"></div>
<div class="a" style="left:8px;top:399px;width:314px;height:1px;background:#d9d9d9;"></div>
<div class="a" style="left:9px;top:400px;width:313px;height:21px;background:#ffffff;"></div>
<div class="a" style="left:8px;top:421px;width:314px;height:1px;background:#d9d9d9;"></div>
<div class="a" style="left:9px;top:422px;width:313px;height:21px;background:#f0f0f0;"></div>
<div class="a" style="left:8px;top:443px;width:314px;height:1px;background:#d9d9d9;"></div>
<div class="a" style="left:9px;top:356px;width:99px;height:21px;background:#0078d7;"></div>
<div class="a" style="left:8px;top:336px;width:1px;height:108px;background:#d9d9d9;"></div>
<div class="a" style="left:108px;top:336px;width:1px;height:108px;background:#d9d9d9;"></div>
<div class="a" style="left:178px;top:336px;width:1px;height:108px;background:#d9d9d9;"></div>
<div class="a" style="left:248px;top:336px;width:1px;height:108px;background:#d9d9d9;"></div>
<div class="a" style="left:318px;top:336px;width:1px;height:108px;background:#d9d9d9;"></div>
<div class="t" style="left:16px;top:339.84px;font-size:12px;color:#000000;transform:scaleX(0.9);transform-origin:0 50%;">Task Name</div>
<div class="t" style="left:116px;top:339.84px;font-size:12px;color:#000000;transform:scaleX(0.9);transform-origin:0 50%;">Input</div>
<div class="t" style="left:185px;top:339.84px;font-size:12px;color:#000000;transform:scaleX(0.9);transform-origin:0 50%;">Output</div>
<div class="t" style="left:256px;top:339.84px;font-size:12px;color:#000000;transform:scaleX(0.9);transform-origin:0 50%;">Errors</div>
<div class="t" style="left:12px;top:360.84px;font-size:12px;color:#ffffff;transform:scaleX(0.9);transform-origin:0 50%;">Invoices</div>
<div class="t" style="left:-26px;width:200px;text-align:right;top:360.84px;font-size:12px;color:#1c1c9c;transform:scaleX(0.9);transform-origin:100% 50%;">2,155</div>
<div class="t" style="left:44px;width:200px;text-align:right;top:360.84px;font-size:12px;color:#2a7a2a;transform:scaleX(0.9);transform-origin:100% 50%;">2,155</div>
<div class="t" style="left:114px;width:200px;text-align:right;top:360.84px;font-size:12px;color:#cc2a2a;transform:scaleX(0.9);transform-origin:100% 50%;">0</div>
<div class="t" style="left:12px;top:382.84px;font-size:12px;color:#000000;transform:scaleX(0.9);transform-origin:0 50%;">FieldProfile</div>
<div class="t" style="left:-26px;width:200px;text-align:right;top:382.84px;font-size:12px;color:#1c1c9c;transform:scaleX(0.9);transform-origin:100% 50%;">2,155</div>
<div class="t" style="left:44px;width:200px;text-align:right;top:382.84px;font-size:12px;color:#2a7a2a;transform:scaleX(0.9);transform-origin:100% 50%;">7</div>
<div class="t" style="left:114px;width:200px;text-align:right;top:382.84px;font-size:12px;color:#cc2a2a;transform:scaleX(0.9);transform-origin:100% 50%;">0</div>
<div class="t" style="left:12px;top:404.84px;font-size:12px;color:#000000;transform:scaleX(0.9);transform-origin:0 50%;">DelimitedDestinat...</div>
<div class="t" style="left:-26px;width:200px;text-align:right;top:404.84px;font-size:12px;color:#1c1c9c;transform:scaleX(0.9);transform-origin:100% 50%;">7</div>
<div class="t" style="left:44px;width:200px;text-align:right;top:404.84px;font-size:12px;color:#2a7a2a;transform:scaleX(0.9);transform-origin:100% 50%;">7</div>
<div class="t" style="left:114px;width:200px;text-align:right;top:404.84px;font-size:12px;color:#cc2a2a;transform:scaleX(0.9);transform-origin:100% 50%;">0</div>
<div class="t" style="left:12px;top:426.84px;font-size:12px;color:#000000;transform:scaleX(0.9);transform-origin:0 50%;">Variables</div>
<div class="t" style="left:-26px;width:200px;text-align:right;top:426.84px;font-size:12px;color:#1c1c9c;transform:scaleX(0.9);transform-origin:100% 50%;">0</div>
<div class="t" style="left:44px;width:200px;text-align:right;top:426.84px;font-size:12px;color:#2a7a2a;transform:scaleX(0.9);transform-origin:100% 50%;">0</div>
<div class="t" style="left:114px;width:200px;text-align:right;top:426.84px;font-size:12px;color:#cc2a2a;transform:scaleX(0.9);transform-origin:100% 50%;">0</div>
<div class="a" style="left:325px;top:336px;width:875px;height:1px;background:#d9d9d9;"></div>
<div class="a" style="left:325px;top:336px;width:1px;height:257px;background:#d9d9d9;"></div>
<div class="a" style="left:374px;top:337px;width:1px;height:130px;background:#d9d9d9;"></div>
<div class="a" style="left:326px;top:357px;width:48px;height:1px;background:#d9d9d9;"></div>
<div class="a" style="left:326px;top:379px;width:48px;height:1px;background:#d9d9d9;"></div>
<div class="a" style="left:326px;top:401px;width:48px;height:1px;background:#d9d9d9;"></div>
<div class="a" style="left:326px;top:423px;width:48px;height:1px;background:#d9d9d9;"></div>
<div class="a" style="left:326px;top:445px;width:48px;height:1px;background:#d9d9d9;"></div>
<div class="a" style="left:326px;top:467px;width:48px;height:1px;background:#d9d9d9;"></div>
<div class="a" style="left:375px;top:337px;width:825px;height:20px;background:#0078d7;"></div>
<svg class="a" style="left:331px;top:344px;" width="6" height="9" viewBox="0 0 6 9"><path d="M0 0L5.5 4.5L0 9z" fill="#333"/></svg>
<div class="t" style="left:356px;top:385.84px;font-size:12px;color:#1e1e1e;transform:scaleX(0.9);transform-origin:0 50%;">S</div>
<div class="t" style="left:378px;top:341.84px;font-size:12px;color:#ffffff;transform:scaleX(0.9);transform-origin:0 50%;">348</div>
<div class="t" style="left:414px;top:341.84px;font-size:12px;color:#ffffff;transform:scaleX(0.9);transform-origin:0 50%;">ASTWKS241:9260</div>
<div class="t" style="left:541px;top:341.84px;font-size:12px;color:#ffffff;transform:scaleX(0.9);transform-origin:0 50%;">44</div>
<div class="t" style="left:569px;top:341.84px;font-size:12px;color:#ffffff;transform:scaleX(0.9);transform-origin:0 50%;">:</div>
<div class="t" style="left:578px;top:341.84px;font-size:12px;color:#ffffff;transform:scaleX(0.9);transform-origin:0 50%;">12/11/2019 4:49:18 PM: Job D:\Flows_for_articles_CP8\Field_Profile.Df queued. Job Id: 44.</div>
<div class="t" style="left:378px;top:363.84px;font-size:12px;color:#000000;transform:scaleX(0.9);transform-origin:0 50%;">349</div>
<div class="t" style="left:414px;top:363.84px;font-size:12px;color:#000000;transform:scaleX(0.9);transform-origin:0 50%;">ASTWKS241:9260</div>
<div class="t" style="left:541px;top:363.84px;font-size:12px;color:#000000;transform:scaleX(0.9);transform-origin:0 50%;">44</div>
<div class="t" style="left:569px;top:363.84px;font-size:12px;color:#000000;transform:scaleX(0.9);transform-origin:0 50%;">:</div>
<div class="t" style="left:578px;top:363.84px;font-size:12px;color:#000000;transform:scaleX(0.9);transform-origin:0 50%;">12/11/2019 4:49:18 PM: Field_Profile.Df: Job started on server ASTWKS241. Job Id 44.</div>
<div class="t" style="left:378px;top:385.84px;font-size:12px;color:#000000;transform:scaleX(0.9);transform-origin:0 50%;">350</div>
<div class="t" style="left:414px;top:385.84px;font-size:12px;color:#000000;transform:scaleX(0.9);transform-origin:0 50%;">ASTWKS241:9260</div>
<div class="t" style="left:541px;top:385.84px;font-size:12px;color:#000000;transform:scaleX(0.9);transform-origin:0 50%;">44</div>
<div class="t" style="left:569px;top:385.84px;font-size:12px;color:#000000;transform:scaleX(0.9);transform-origin:0 50%;">:</div>
<div class="t" style="left:578px;top:385.84px;font-size:12px;color:#000000;transform:scaleX(0.9);transform-origin:0 50%;">12/11/2019 4:49:18 PM: Executing query for source Invoices.</div>
<div class="t" style="left:378px;top:407.84px;font-size:12px;color:#000000;transform:scaleX(0.9);transform-origin:0 50%;">351</div>
<div class="t" style="left:414px;top:407.84px;font-size:12px;color:#000000;transform:scaleX(0.9);transform-origin:0 50%;">ASTWKS241:9260</div>
<div class="t" style="left:541px;top:407.84px;font-size:12px;color:#000000;transform:scaleX(0.9);transform-origin:0 50%;">44</div>
<div class="t" style="left:569px;top:407.84px;font-size:12px;color:#000000;transform:scaleX(0.9);transform-origin:0 50%;">:</div>
<div class="t" style="left:578px;top:407.84px;font-size:12px;color:#000000;transform:scaleX(0.9);transform-origin:0 50%;">12/11/2019 4:49:18 PM: Invoices: DbReaderBase Connection closed</div>
<div class="t" style="left:378px;top:429.84px;font-size:12px;color:#000000;transform:scaleX(0.9);transform-origin:0 50%;">352</div>
<div class="t" style="left:414px;top:429.84px;font-size:12px;color:#000000;transform:scaleX(0.9);transform-origin:0 50%;">ASTWKS241:9260</div>
<div class="t" style="left:541px;top:429.84px;font-size:12px;color:#000000;transform:scaleX(0.9);transform-origin:0 50%;">44</div>
<div class="t" style="left:569px;top:429.84px;font-size:12px;color:#000000;transform:scaleX(0.9);transform-origin:0 50%;">:</div>
<div class="t" style="left:578px;top:429.84px;font-size:12px;color:#000000;transform:scaleX(0.9);transform-origin:0 50%;">12/11/2019 4:49:19 PM: DelimitedDestination: Destination &nbsp;<span style="color:#1a1aa8;text-decoration:underline">file://D:\Flows_for_articles_CP8\Field_Profile.csv</span></div>
<div class="t" style="left:378px;top:451.84px;font-size:12px;color:#000000;transform:scaleX(0.9);transform-origin:0 50%;">353</div>
<div class="t" style="left:414px;top:451.84px;font-size:12px;color:#000000;transform:scaleX(0.9);transform-origin:0 50%;">ASTWKS241:9260</div>
<div class="t" style="left:541px;top:451.84px;font-size:12px;color:#000000;transform:scaleX(0.9);transform-origin:0 50%;">44</div>
<div class="t" style="left:569px;top:451.84px;font-size:12px;color:#000000;transform:scaleX(0.9);transform-origin:0 50%;">:</div>
<div class="t" style="left:578px;top:451.84px;font-size:12px;color:#000000;transform:scaleX(0.9);transform-origin:0 50%;">12/11/2019 4:49:19 PM: Field_Profile.Df: Job Id 44. Job ended. Elapsed Time: 00:00:00.533</div>
<div class="a" style="left:8px;top:593px;width:314px;height:15px;background:#f0f0f0;"></div>
<div class="a" style="left:25px;top:593px;width:151px;height:15px;background:#cdcdcd;"></div>
<div class="a" style="left:326px;top:593px;width:874px;height:15px;background:#f0f0f0;"></div>
<div class="a" style="left:342px;top:593px;width:289px;height:15px;background:#cdcdcd;"></div>
<div class="a" style="left:6px;top:608px;width:1194px;height:2px;background:#d5dbe2;"></div>
<svg class="a" style="left:11px;top:596px;" width="10" height="10" viewBox="0 0 10 10"><path d="M6.5 1.5L2.5 5L6.5 8.5" fill="none" stroke="#555" stroke-width="2"/></svg>
<svg class="a" style="left:309px;top:596px;" width="10" height="10" viewBox="0 0 10 10"><path d="M3.5 1.5L7.5 5L3.5 8.5" fill="none" stroke="#555" stroke-width="2"/></svg>
<svg class="a" style="left:329px;top:596px;" width="10" height="10" viewBox="0 0 10 10"><path d="M6.5 1.5L2.5 5L6.5 8.5" fill="none" stroke="#555" stroke-width="2"/></svg>
<div class="a" style="left:1px;top:225px;width:1198px;height:279px;border:5px solid #ea1c24"></div>
</body></html>
